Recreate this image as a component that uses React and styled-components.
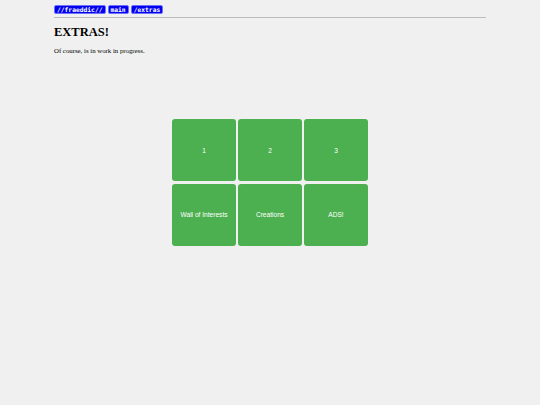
import React from "react";
import styled, { createGlobalStyle } from "styled-components";

const GlobalStyle = createGlobalStyle`
  html, body {
    margin: 0;
    padding: 0;
    background: #f0f0f0;
  }
  body {
    font-family: "Liberation Serif", "Times New Roman", serif;
    color: #000;
  }
`;

const Page = styled.div`
  width: 432px;
  margin: 0 auto;
  padding-top: 5px;
`;

const Crumbs = styled.nav`
  display: flex;
  gap: 2px;
  padding-bottom: 3px;
  border-bottom: 1px solid #bdbdbd;
`;

const Crumb = styled.a`
  display: block;
  box-sizing: border-box;
  height: 9px;
  line-height: 8px;
  padding: 0 2px;
  background: #0000ee;
  color: #fff;
  border: 0.5px solid #7070ff;
  border-radius: 2px;
  font-family: "DejaVu Sans Mono", "Liberation Mono", monospace;
  font-weight: bold;
  font-size: 6.3px;
  text-decoration: none;
`;

const Title = styled.h1`
  margin: 7px 0 0;
  font-size: 12.5px;
  line-height: 14px;
  font-weight: bold;
`;

const Note = styled.p`
  margin: 7px 0 0;
  font-size: 6.8px;
  line-height: 9px;
`;

const Grid = styled.div`
  display: grid;
  grid-template-columns: repeat(3, 63.5px);
  grid-auto-rows: 62px;
  gap: 2.5px;
  justify-content: center;
  margin-top: 64px;
`;

const Tile = styled.div`
  display: flex;
  align-items: center;
  justify-content: center;
  background: #4caf50;
  border-radius: 3px;
  color: #fff;
  font-family: "Liberation Sans", Arial, sans-serif;
  font-size: 6.6px;
`;

const tiles = ["1", "2", "3", "Wall of Interests", "Creations", "ADS!"];

export default function App() {
  return (
    <>
      <GlobalStyle />
      <Page>
        <Crumbs>
          <Crumb href="#">//fraeddic//</Crumb>
          <Crumb href="#">main</Crumb>
          <Crumb href="#">/extras</Crumb>
        </Crumbs>
        <Title>EXTRAS!</Title>
        <Note>Of course, is in work in progress.</Note>
        <Grid>
          {tiles.map((t) => (
            <Tile key={t}>{t}</Tile>
          ))}
        </Grid>
      </Page>
    </>
  );
}
